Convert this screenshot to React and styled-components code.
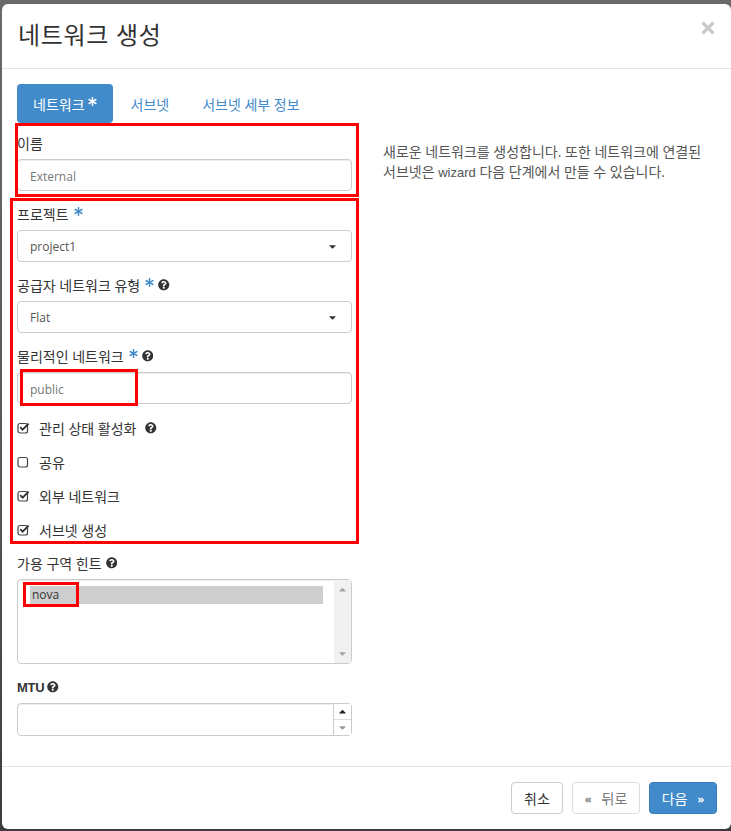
import styled, { createGlobalStyle } from "styled-components";
import { FaAsterisk, FaQuestionCircle, FaTimes, FaCaretDown, FaCaretUp } from "react-icons/fa";

const GlobalStyle = createGlobalStyle`
  html, body { margin: 0; padding: 0; height: 100%; }
  body {
    background: linear-gradient(#6a6a6a, #555 60%, #3c3c3c);
    font-family: "Open Sans", "Noto Sans CJK KR", sans-serif;
    font-size: 14px;
    color: #333;
    overflow: hidden;
  }
  * { box-sizing: border-box; }
`;

const Page = styled.div`
  padding: 4px 0 2px 2px;
  height: 831px;
`;

const Modal = styled.div`
  position: relative;
  height: 825px;
  background: #fff;
  border-radius: 6px;
  display: flex;
  flex-direction: column;
`;

const Header = styled.div`
  height: 65px;
  flex: none;
  border-bottom: 1px solid #e5e5e5;
  padding: 0 14px 0 16px;
  display: flex;
  align-items: center;
  justify-content: space-between;
`;

const Title = styled.h4`
  margin: 0 0 6px;
  font-size: 24px;
  font-weight: 400;
  color: #333;
  letter-spacing: 0.7px;
`;

const Close = styled.span`
  color: #c8c8c8;
  font-size: 18px;
  display: flex;
  margin-bottom: 16px;
`;

const Body = styled.div`
  flex: 1;
  display: flex;
  padding: 15px 15px 0;
`;

const Left = styled.div`
  width: 335px;
  flex: none;
`;

const Tabs = styled.div`
  display: flex;
  height: 39px;
  margin-bottom: 10px;
`;

const Tab = styled.div`
  display: flex;
  align-items: center;
  gap: 3px;
  padding: 0 ${(p) => p.$pad}px;
  border-radius: 4px;
  font-size: 14px;
  background: ${(p) => (p.$active ? "#428bca" : "transparent")};
  color: ${(p) => (p.$active ? "#fff" : "#428bca")};
  svg { font-size: 9px; margin-top: -4px; }
`;

const Field = styled.div`
  margin-bottom: ${(p) => p.$gap ?? 13}px;
`;

const Label = styled.label`
  display: flex;
  align-items: center;
  height: 20px;
  margin-bottom: 6px;
  font-size: 14px;
  gap: 4px;
  color: #333;
`;

const BoldLabel = styled(Label)`
  font-family: "Liberation Sans", sans-serif;
  font-size: 13px;
  font-weight: 700;
  letter-spacing: -0.3px;
  gap: 3px;
`;

const Required = styled(FaAsterisk)`
  color: #428bca;
  font-size: 9px;
  margin: -5px 0 0 1px;
`;

const Help = styled(FaQuestionCircle)`
  color: #333;
  font-size: 11.5px;
  flex: none;
`;

const Input = styled.input`
  display: block;
  width: 100%;
  height: 32px;
  padding: 2px 12px 0;
  border: 1px solid #ccc;
  border-radius: 4px;
  font: 12px "Open Sans", "Noto Sans CJK KR", sans-serif;
  color: #555;
  outline: none;
  box-shadow: inset 0 1px 1px rgba(0, 0, 0, 0.075);
  &::placeholder { color: #777; opacity: 1; }
`;

const Select = styled.div`
  height: 32px;
  padding: 0 13px 0 12px;
  border: 1px solid #ccc;
  border-radius: 4px;
  font-size: 12px;
  color: #555;
  display: flex;
  align-items: center;
  justify-content: space-between;
  svg { color: #333; font-size: 11px; }
`;

const CheckGroup = styled.div`
  margin-bottom: 6px;
`;

const CheckRow = styled.div`
  height: 34px;
  display: flex;
  align-items: center;
  font-size: 14px;
  svg.box { margin-right: 9px; flex: none; }
  svg.help { margin-left: 9px; }
`;

const Listbox = styled.div`
  height: 85px;
  border: 1px solid #ccc;
  border-radius: 4px;
  display: flex;
  box-shadow: inset 0 1px 1px rgba(0, 0, 0, 0.075);
  margin-bottom: 13px;
`;

const ListInner = styled.div`
  flex: 1;
  padding: 6px 11px 0 12px;
`;

const Option = styled.div`
  height: 18px;
  line-height: 18px;
  padding-left: 2px;
  background: #cecece;
  font-size: 12px;
  color: #333;
`;

const Scrollbar = styled.div`
  width: 17px;
  flex: none;
  background: #f1f1f1;
  display: flex;
  flex-direction: column;
  justify-content: space-between;
  align-items: center;
  padding: 4px 0;
  color: #a3a3a3;
  font-size: 11px;
`;

const NumberWrap = styled.div`
  height: 33px;
  border: 1px solid #ccc;
  border-radius: 4px;
  display: flex;
  box-shadow: inset 0 1px 1px rgba(0, 0, 0, 0.075);
`;

const NumberInput = styled.div`
  flex: 1;
`;

const Spinner = styled.div`
  width: 18px;
  flex: none;
  border-left: 1px solid #ccc;
  display: flex;
  flex-direction: column;
  background: #fff;
`;

const Spin = styled.div`
  flex: 1;
  display: flex;
  align-items: center;
  justify-content: center;
  font-size: 11px;
  color: ${(p) => p.$color};
  & + & { border-top: 1px solid #ddd; }
`;

const Description = styled.p`
  margin: 0;
  padding: 58px 0 0 31px;
  font-size: 14px;
  line-height: 20px;
  color: #555;
  width: 362px;
`;

const Latin = styled.span`
  font-family: "Liberation Sans", sans-serif;
  font-size: 13px;
`;

const Footer = styled.div`
  height: 63px;
  flex: none;
  border-top: 1px solid #e5e5e5;
  padding: 15px 14px 0 0;
  display: flex;
  justify-content: flex-end;
  gap: 9px;
`;

const Button = styled.div`
  height: 32px;
  width: ${(p) => p.$w}px;
  border-radius: 4px;
  display: flex;
  align-items: center;
  justify-content: center;
  gap: 10px;
  font-size: 14px;
  border: 1px solid ${(p) => (p.$primary ? "#357ebd" : "#ccc")};
  background: ${(p) => (p.$primary ? "#428bca" : "#fff")};
  color: ${(p) => (p.$primary ? "#fff" : "#333")};
  opacity: ${(p) => (p.$disabled ? 0.65 : 1)};
`;

const Chevron = styled.span`
  font-size: 11px;
  font-weight: 700;
`;

const Callout = styled.div`
  position: absolute;
  left: ${(p) => p.$x}px;
  top: ${(p) => p.$y}px;
  width: ${(p) => p.$w}px;
  height: ${(p) => p.$h}px;
  border: 3px solid #f00;
  pointer-events: none;
`;

function CheckBox({ on }) {
  return (
    <svg className="box" width="13" height="12" viewBox="0 0 13 12" fill="none">
      <rect x="1" y="1.5" width="9.5" height="9.5" rx="2" stroke="#444" strokeWidth="1.2" />
      {on && <path d="M3.2 5.2 5.6 7.6 11.6 1.6" stroke="#333" strokeWidth="1.9" />}
    </svg>
  );
}

function Check({ on, children, help }) {
  return (
    <CheckRow>
      <CheckBox on={on} />
      <span>{children}</span>
      {help && <Help className="help" />}
    </CheckRow>
  );
}

export default function App() {
  return (
    <Page>
      <GlobalStyle />
      <Modal>
        <Header>
          <Title>네트워크 생성</Title>
          <Close><FaTimes /></Close>
        </Header>
        <Body>
          <Left>
            <Tabs>
              <Tab $active $pad={16}>네트워크 <FaAsterisk /></Tab>
              <Tab $pad={18}>서브넷</Tab>
              <Tab $pad={15}>서브넷 세부 정보</Tab>
            </Tabs>
            <Field>
              <Label>이름</Label>
              <Input readOnly placeholder="External" />
            </Field>
            <Field>
              <Label>프로젝트 <Required /></Label>
              <Select>project1 <FaCaretDown /></Select>
            </Field>
            <Field>
              <Label>공급자 네트워크 유형 <Required /> <Help /></Label>
              <Select>Flat <FaCaretDown /></Select>
            </Field>
            <Field $gap={7}>
              <Label>물리적인 네트워크 <Required /> <Help /></Label>
              <Input readOnly placeholder="public" />
            </Field>
            <CheckGroup>
              <Check on help>관리 상태 활성화</Check>
              <Check>공유</Check>
              <Check on>외부 네트워크</Check>
              <Check on>서브넷 생성</Check>
            </CheckGroup>
            <Field $gap={0}>
              <Label>가용 구역 힌트 <Help /></Label>
              <Listbox>
                <ListInner><Option>nova</Option></ListInner>
                <Scrollbar><FaCaretUp /><FaCaretDown /></Scrollbar>
              </Listbox>
            </Field>
            <Field $gap={0}>
              <BoldLabel>MTU <Help /></BoldLabel>
              <NumberWrap>
                <NumberInput />
                <Spinner>
                  <Spin $color="#222"><FaCaretUp /></Spin>
                  <Spin $color="#999"><FaCaretDown /></Spin>
                </Spinner>
              </NumberWrap>
            </Field>
          </Left>
          <Description>새로운 네트워크를 생성합니다. 또한 네트워크에 연결된 서브넷은 <Latin>wizard</Latin> 다음 단계에서 만들 수 있습니다.</Description>
        </Body>
        <Footer>
          <Button $w={52}>취소</Button>
          <Button $w={68} $disabled><Chevron>«</Chevron> 뒤로</Button>
          <Button $w={68} $primary>다음 <Chevron>»</Chevron></Button>
        </Footer>
        <Callout $x={13} $y={119} $w={344} $h={74} />
        <Callout $x={8} $y={194} $w={349} $h={346} />
        <Callout $x={18} $y={365} $w={118} $h={37} />
        <Callout $x={21} $y={578} $w={56} $h={25} />
      </Modal>
    </Page>
  );
}
